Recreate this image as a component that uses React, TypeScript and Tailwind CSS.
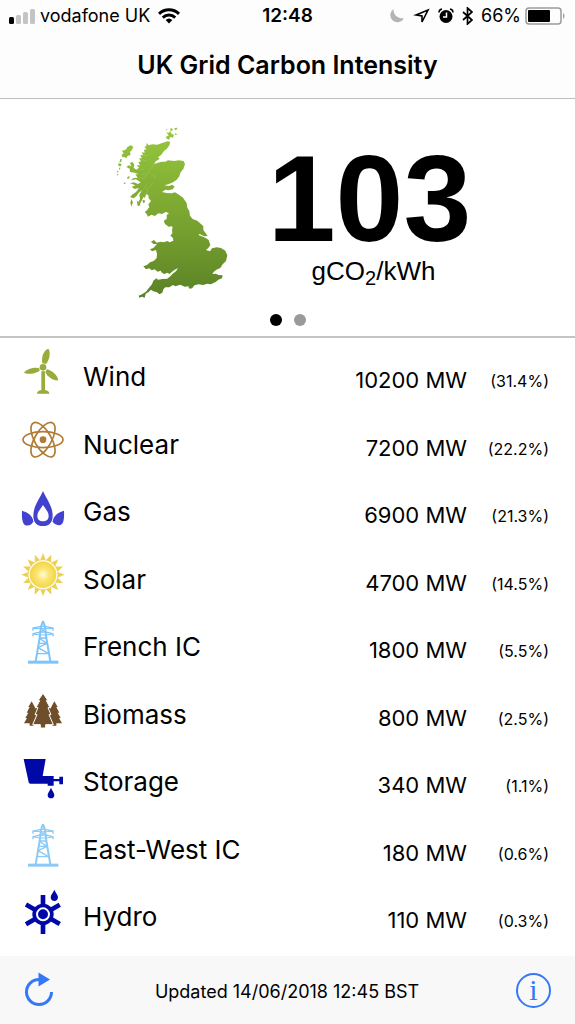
import React from 'react';

interface Source {
    name: string;
    mw: number;
    share: string;
    icon: React.ReactNode;
}

interface IconProps {
    color: string;
    children: React.ReactNode;
}

const SourceIcon: React.FC<IconProps> = ({ color, children }) => (
    <svg viewBox="0 0 144 144" className="block w-12 h-12" fill={color} stroke="none" aria-hidden="true">
        {children}
    </svg>
);

const WindIcon = () => (
    <SourceIcon color="#97ac3a">
        <circle cx="72" cy="58" r="10" />
        <path d="M70 46C66 28 74 6 88 2C95 10 93 34 81 48Z" />
        <path d="M61 61C50 56 24 62 15 74C24 80 50 78 62 68Z" />
        <path d="M84 64C98 67 116 82 118 97C104 99 84 86 79 72Z" />
        <path d="M67 70h11v56c8 1 13 5 13 11H54c0-6 5-10 13-11z" />
    </SourceIcon>
);

const NuclearIcon = () => (
    <SourceIcon color="#b07c35">
        <g fill="none" stroke="#b07c35" strokeWidth="5">
            <ellipse cx="72" cy="71" rx="60" ry="24" />
            <ellipse cx="72" cy="71" rx="58" ry="25" transform="rotate(60 72 71)" />
            <ellipse cx="72" cy="71" rx="58" ry="25" transform="rotate(120 72 71)" />
        </g>
        <circle cx="72" cy="71" r="10" />
    </SourceIcon>
);

const GasIcon = () => (
    <SourceIcon color="#4242cf">
        <path
            fillRule="evenodd"
            d="M72 24C80 44 101 68 101 98C101 119 90 129 72 129C54 129 43 119 43 98C43 68 64 44 72 24ZM72 66C65 78 55 86 55 99C55 109 62 115 72 115C82 115 89 109 89 99C89 86 79 78 72 66Z"
        />
        <path d="M9 83C26 88 41 98 43 115C40 125 30 129 20 127C9 123 8 102 9 83Z" />
        <path d="M135 83C118 88 103 98 101 115C104 124 114 128 124 126C135 122 136 102 135 83Z" />
    </SourceIcon>
);

const SolarIcon = () => (
    <SourceIcon color="#ecd052">
        <defs>
            <radialGradient id="sun">
                <stop offset="0" stopColor="#fffbe0" />
                <stop offset="0.45" stopColor="#fbe673" />
                <stop offset="1" stopColor="#f3d748" />
            </radialGradient>
        </defs>
        {Array.from({ length: 16 }, (_, i) => (
            <path key={i} d="M63 29L72 6L81 29Q72 25 63 29Z" transform={`rotate(${i * 22.5} 72 71)`} />
        ))}
        <circle cx="72" cy="71" r="39" fill="url(#sun)" stroke="#ecd052" strokeWidth="2" />
    </SourceIcon>
);

const PylonIcon: React.FC<{ color: string }> = ({ color }) => (
    <SourceIcon color={color}>
        <g fill="none" stroke={color} strokeWidth="4">
            <path d="M72 9L66 26L62 60L50 130M72 9L78 26L82 60L94 130" strokeWidth="6" />
            <path d="M42 38V30L66 25H78L102 30V38M42 55V47L64 42H80L102 47V55" />
            <path d="M42 31L65 32H79L102 31M42 48L63 51H81L102 48M65 31L80 43M79 31L64 43" strokeWidth="3" />
            <path d="M62 60H82M60 60L84 76L57 89M59 76H84M57 89L89 107M54 107H90" />
        </g>
        <path d="M27 128H118V137H27Z" />
    </SourceIcon>
);

const BiomassIcon = () => (
    <SourceIcon color="#6f4f2a">
        <path d="M38 46L28 63H32L23 80H28L19 96H24L15 112H32V119H44V112H62V46L50 68Z" />
        <path d="M106 46L116 63H112L121 80H116L125 96H120L129 112H112V119H100V112H82V46L94 68Z" />
        <path
            stroke="#ffffff"
            strokeWidth="3"
            d="M72 22L57 44H62L51 65H57L48 86H54L41 116H64V126H80V116H103L90 86H96L87 65H93L82 44H87Z"
        />
    </SourceIcon>
);

const StorageIcon = () => (
    <SourceIcon color="#0009a8">
        <path d="M14 18H80L71 69H104V78H121V71H132V94H121V85H104V98H86V92H34Q30 92 29 88Z" />
        <path d="M96 104C99 113 106 119 106 126C106 133 102 136 96 136C90 136 86 133 86 126C86 119 93 113 96 104Z" />
    </SourceIcon>
);

const HydroIcon = () => (
    <SourceIcon color="#0009a8">
        <g stroke="#0009a8" strokeWidth="14">
            <path d="M72 21V138" />
            <path d="M72 21V138" transform="rotate(60 72 79)" />
            <path d="M72 21V138" transform="rotate(120 72 79)" />
        </g>
        <circle cx="72" cy="79" r="32" />
        <circle cx="72" cy="79" r="18" stroke="#ffffff" strokeWidth="6" />
        <path d="M106 5C109 14 117 20 117 28C117 35 112 39 106 39C100 39 95 35 95 28C95 20 103 14 106 5Z" />
    </SourceIcon>
);

const sources: Source[] = [
    { name: 'Wind', mw: 10200, share: '31.4', icon: <WindIcon /> },
    { name: 'Nuclear', mw: 7200, share: '22.2', icon: <NuclearIcon /> },
    { name: 'Gas', mw: 6900, share: '21.3', icon: <GasIcon /> },
    { name: 'Solar', mw: 4700, share: '14.5', icon: <SolarIcon /> },
    { name: 'French IC', mw: 1800, share: '5.5', icon: <PylonIcon color="#7cc4fa" /> },
    { name: 'Biomass', mw: 800, share: '2.5', icon: <BiomassIcon /> },
    { name: 'Storage', mw: 340, share: '1.1', icon: <StorageIcon /> },
    { name: 'East-West IC', mw: 180, share: '0.6', icon: <PylonIcon color="#8ccaf5" /> },
    { name: 'Hydro', mw: 110, share: '0.3', icon: <HydroIcon /> },
];

const StatusBar = () => (
    <div className="grid grid-cols-[1fr_auto_1fr] items-center h-8 px-2 text-lg">
        <div className="flex items-center gap-1">
            <svg viewBox="0 0 28 18" className="w-7 h-[18px]" aria-hidden="true">
                <rect x="1" y="10" width="5" height="7" rx="1.5" fill="#000000" />
                <rect x="8" y="8" width="5" height="9" rx="1.5" fill="#c4c4c4" />
                <rect x="15" y="5" width="5" height="12" rx="1.5" fill="#c4c4c4" />
                <rect x="22" y="2" width="5" height="15" rx="1.5" fill="#c4c4c4" />
            </svg>
            <span>vodafone UK</span>
            <svg viewBox="0 0 22 16" className="w-[22px] h-4 ml-1" fill="none" stroke="#000000" strokeWidth="3" aria-hidden="true">
                <path d="M1 5.8A14.5 14.5 0 0 1 21 5.8" />
                <path d="M4.8 9.6A9 9 0 0 1 17.2 9.6" />
                <path d="M11 15.5L7.6 12.1A5 5 0 0 1 14.4 12.1Z" fill="#000000" stroke="none" />
            </svg>
        </div>
        <span className="text-[19px] font-semibold">12:48</span>
        <div className="flex items-center justify-end">
            <svg viewBox="0 0 86 18" className="w-[86px] h-[18px] mr-2" aria-hidden="true">
                <path d="M6.5 2A7.2 7.2 0 1 0 17 11A8.5 8.5 0 0 1 6.5 2Z" fill="#b4b4b4" />
                <path d="M29 8L41 3L35 15L35 9Z" fill="none" stroke="#000000" strokeWidth="1.6" />
                <circle cx="59" cy="9.5" r="6.5" />
                <path d="M59.5 5.5V10H56" fill="none" stroke="#ffffff" strokeWidth="1.5" />
                <path
                    d="M52 5.5Q52 2.5 55 2M63 2Q66 2.500 66 5.5"
                    fill="none"
                    stroke="#000000"
                    strokeWidth="1.5"
                />
                <path d="M76 5L85 13L80.5 17V1L85 5L76 13" fill="none" stroke="#000000" strokeWidth="1.7" />
            </svg>
            <span>66%</span>
            <svg viewBox="0 0 42 18" className="w-[42px] h-[18px] ml-1" aria-hidden="true">
                <rect x="1" y="1" width="35" height="16" rx="3" fill="none" stroke="#9b9b9b" strokeWidth="1.5" />
                <rect x="3" y="3" width="22" height="12" rx="1" />
                <path d="M38 6Q41 9 38 12Z" fill="#9b9b9b" />
            </svg>
        </div>
    </div>
);

const BritainMap = () => (
    <svg viewBox="0 0 420 570" className="w-[140px] h-[190px]" role="img" aria-label="Great Britain">
        <defs>
            <linearGradient id="land" x1="0" y1="40" x2="0" y2="550" gradientUnits="userSpaceOnUse">
                <stop offset="0" stopColor="#97c83f" />
                <stop offset="0.3" stopColor="#86b336" />
                <stop offset="0.6" stopColor="#76a02f" />
                <stop offset="1" stopColor="#5a8126" />
            </linearGradient>
        </defs>
        <g fill="url(#land)">
            <path d="M128 84L134 91L145 88L160 89L172 85L182 82L190 79L199 80L196 91L190 100L180 108L172 119L162 127L167 132L155 139L151 147L162 143L172 140L184 140L192 136L210 138L225 136L239 138L243 148L238 162L230 172L226 184L218 194L207 202L193 208L181 211L194 213L205 209L212 215L206 223L194 226L184 224L174 231L188 234L203 235L213 232L225 239L237 248L248 264L250 278L256 288L258 302L266 312L280 317L291 327L298 334L298 345L304 353L311 363L301 364L287 357L283 360L297 365L305 369L314 375L319 390L313 399L306 405L318 409L324 400L338 397L351 399L364 407L370 421L366 438L356 448L349 459L337 464L329 471L325 477L336 476L343 480L356 481L354 490L343 494L335 501L320 508L310 506L297 510L284 508L271 511L265 519L255 514L242 515L229 509L214 514L207 510L196 517L184 517L178 523L175 533L166 538L159 532L148 529L141 524L133 532L125 536L122 548L114 545L106 548L104 542L114 538L126 530L134 520L144 508L148 497L157 490L162 494L176 492L190 491L199 484L206 476L216 469L222 459L211 465L203 471L197 477L190 473L181 477L174 473L170 467L161 470L152 463L143 466L136 460L126 463L118 454L129 450L138 442L150 437L158 429L159 417L156 405L144 409L138 403L148 399L159 387L148 387L141 380L150 375L158 383L170 380L179 382L190 378L197 382L208 377L207 369L199 362L205 355L204 345L206 337L201 333L195 336L183 327L179 318L188 311L188 301L195 294L185 291L174 297L163 295L153 303L142 299L132 305L128 297L122 291L129 286L136 276L133 268L141 258L134 250L133 240L126 238L123 249L119 245L114 255L106 271L101 265L108 252L106 240L114 226L104 234L97 244L88 250L78 246L86 238L96 231L105 219L92 222L83 216L94 211L78 205L90 202L102 207L110 202L96 193L81 196L88 189L101 188L94 178L104 178L92 173L78 171L77 161L67 156L75 151L82 154L78 144L85 140L91 149L89 158L97 164L105 158L98 151L108 151L103 142L111 139L105 130L114 130L108 121L117 121L113 112L122 113L120 104L128 103L121 96L127 93Z" />
            <path d="M70 96L77 92L82 91L88 97L83 106L78 111L80 119L70 124L67 130L61 126L55 127L53 119L59 115L54 107L63 105L67 102Z" />
            <path d="M49 132L54 133L51 141L46 143ZM43 145L53 147L50 154L43 153ZM45 158L50 158L46 166ZM39 167L44 169L41 174ZM38 178L43 177L41 182Z" />
            <path d="M187 51L193 54L199 49L203 57L210 59L207 68L198 66L196 74L189 72L185 65L194 62ZM200 39L207 42L203 49L198 46ZM211 39L219 38L220 43L213 46ZM186 43L190 43L188 47ZM213 54L220 58L214 61Z" />
            <path d="M70 186L77 183L76 190L70 192ZM58 204L65 202L63 208ZM116 254L124 257L120 265L116 261ZM82 252L87 262L82 275L79 263ZM98 256L104 263L110 271L101 273Z" />
            <path d="M254 513L265 515L262 521L254 520Z" />
        </g>
        <g fill="none" stroke="#ffffff" strokeWidth="1.5" opacity="0.25">
            <path d="M152 143L144 158L132 172L118 193M108 164L120 163M111 178L124 176M106 189L121 188M128 208L117 226M133 216L126 237M148 178L154 192M115 134L126 138M117 119L130 123M146 204L136 218" />
        </g>
    </svg>
);

const App: React.FC = () => {
    return (
        <div className="min-h-screen flex flex-col bg-white text-black font-['Inter','Liberation_Sans',sans-serif]">
            <header className="bg-[#fdfdfd] border-b border-[#bdbdbd]">
                <StatusBar />
                <h1 className="flex items-center justify-center h-[66px] text-[25px] leading-8 font-semibold">
                    UK Grid Carbon Intensity
                </h1>
            </header>

            <section className="flex flex-col items-center pt-4 border-b-2 border-[#c4c4c4]">
                <div className="flex items-start justify-center gap-6">
                    <BritainMap />
                    <div className="flex flex-col items-center pt-6 font-['Liberation_Sans',sans-serif]">
                        <p className="text-[122px] leading-[120px] font-bold">103</p>
                        <p className="pl-2 text-[26px] leading-6">
                            gCO<sub className="text-xl leading-none">2</sub>/kWh
                        </p>
                    </div>
                </div>
                <div className="flex gap-3 py-[9px] pb-[10px]">
                    <button type="button" aria-label="Page 1" className="w-3 h-3 rounded-full bg-black" />
                    <button type="button" aria-label="Page 2" className="w-3 h-3 rounded-full bg-[#9a9a9a]" />
                </div>
            </section>

            <main className="flex-1">
                <table className="w-full">
                    <tbody>
                        {sources.map(source => (
                            <tr key={source.name} className="odd:h-[68px] even:h-[67px]">
                                <td className="w-[83px] p-0 pl-[19px]">{source.icon}</td>
                                <th scope="row" className="p-0 pt-[10px] text-left font-normal text-[26px] leading-8">
                                    {source.name}
                                </th>
                                <td className="p-0 pt-4 text-right text-[22px] leading-8">{source.mw} MW</td>
                                <td className="w-[108px] p-0 pt-[18px] pr-[26px] text-right text-base leading-8">({source.share}%)</td>
                            </tr>
                        ))}
                    </tbody>
                </table>
            </main>

            <footer className="flex items-center justify-between h-[68px] px-5 bg-[#f8f8f8]">
                <button type="button" aria-label="Refresh">
                    <svg viewBox="0 0 38 38" className="w-[38px] h-[38px]" aria-hidden="true">
                        <path d="M19 8.5A12.5 12.5 0 1 0 31.5 21" fill="none" stroke="#3478f6" strokeWidth="3" />
                        <path d="M18.5 1.5L30 8.5L18.5 15.5Z" fill="#3478f6" />
                    </svg>
                </button>
                <p className="pt-1 text-lg">Updated 14/06/2018 12:45 BST</p>
                <button
                    type="button"
                    aria-label="Information"
                    className="flex items-center justify-center w-[35px] h-[35px] mr-1 rounded-full border-2 border-[#3478f6] text-[#3478f6] font-['Liberation_Serif',serif] text-3xl leading-8"
                >
                    i
                </button>
            </footer>
        </div>
    );
};

export default App;
